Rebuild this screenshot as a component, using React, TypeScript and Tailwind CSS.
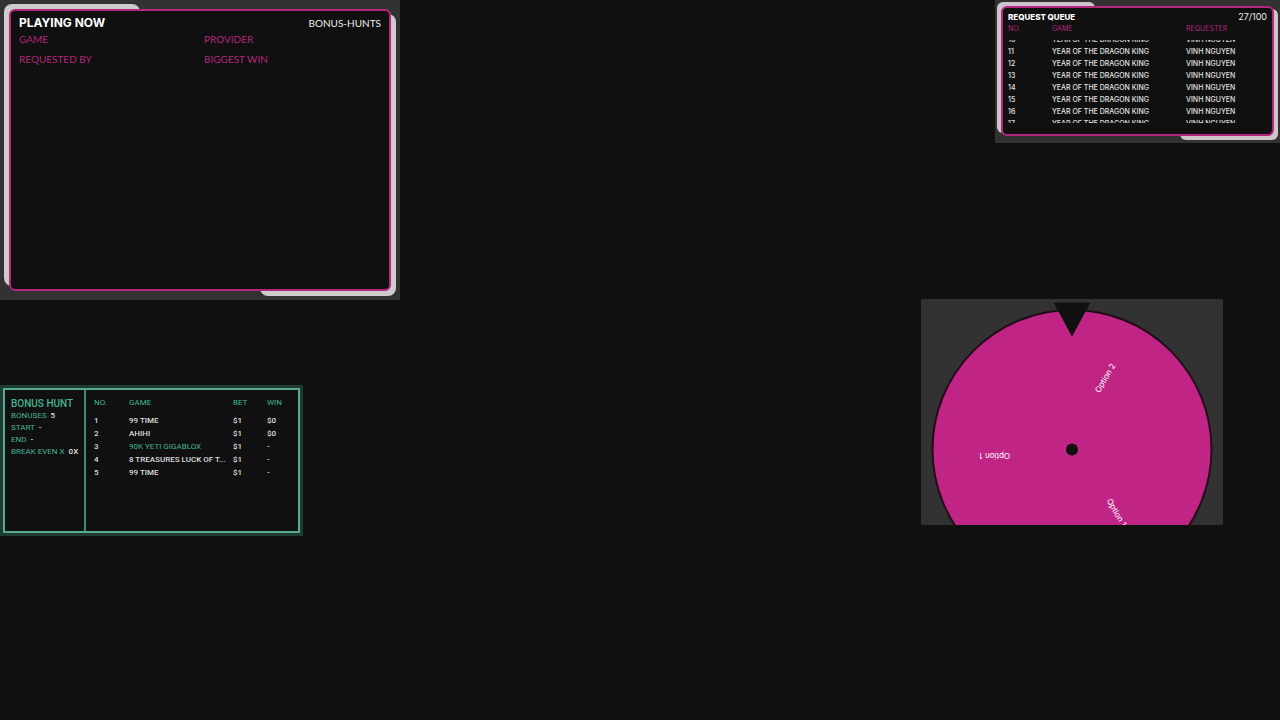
import type { ReactNode } from "react";

type HuntRow = { no: number; game: string; bet: string; win: string; active?: boolean };

const huntRows: HuntRow[] = [
  { no: 1, game: "99 TIME", bet: "$1", win: "$0" },
  { no: 2, game: "AHIHI", bet: "$1", win: "$0" },
  { no: 3, game: "90K YETI GIGABLOX", bet: "$1", win: "-", active: true },
  { no: 4, game: "8 TREASURES LUCK OF T...", bet: "$1", win: "-" },
  { no: 5, game: "99 TIME", bet: "$1", win: "-" },
];

const huntStats = [
  { label: "BONUSES", value: "5" },
  { label: "START", value: "-" },
  { label: "END", value: "-" },
  { label: "BREAK EVEN X", value: "0X" },
];

const queueNumbers = [10, 11, 12, 13, 14, 15, 16, 17];

const wheelOptions = [
  { label: "Option 2", angle: -60 },
  { label: "Option 1", angle: 60 },
  { label: "Option 1", angle: 180 },
];

function PlayingNow() {
  return (
    <section className="relative isolate h-[300px] w-[400px] bg-[#323232] p-[9px]">
      <div className="absolute top-1 left-1 -z-10 h-[282px] w-[136px] rounded-lg bg-[#cfcbcd]" />
      <div className="absolute right-1 bottom-1 -z-10 h-[282px] w-[136px] rounded-lg bg-[#cfcbcd]" />
      <div className="h-full rounded-md border-2 border-[#b3267c] bg-[#101010] px-2 py-1">
        <header className="flex items-center justify-between leading-4">
          <h2 className="text-[12px] font-bold text-white">PLAYING NOW</h2>
          <span className="font-['Lato',sans-serif] text-[10px] text-[#eeeeee]">BONUS-HUNTS</span>
        </header>
        <dl className="grid grid-cols-2 gap-x-2 font-['Lato',sans-serif] text-[10px] text-[#b3267c]">
          <dt className="leading-4">GAME</dt>
          <dt className="leading-4">PROVIDER</dt>
          <dt className="leading-6">REQUESTED BY</dt>
          <dt className="leading-6">BIGGEST WIN</dt>
        </dl>
      </div>
    </section>
  );
}

function QueueRow({ children }: { children: ReactNode }) {
  return <tr className="grid grid-cols-[44px_134px_1fr] text-left">{children}</tr>;
}

function RequestQueue() {
  return (
    <section className="relative isolate h-[143px] w-[285px] bg-[#323232] p-[6px]">
      <div className="absolute top-[2px] left-[2px] -z-10 h-[131px] w-[98px] rounded-md bg-[#cfc4cc]" />
      <div className="absolute right-[2px] bottom-[3px] -z-10 h-[131px] w-[98px] rounded-md bg-[#cfc4cc]" />
      <div className="h-[130px] rounded-md border-2 border-[#b3267c] bg-[#101010] px-[5px] pt-[3px]">
        <header className="flex items-center justify-between leading-3">
          <h2 className="text-[8px] font-extrabold text-white">REQUEST QUEUE</h2>
          <span className="text-[9px] text-[#eeeeee]">27/100</span>
        </header>
        <table className="block text-[7px] leading-3">
          <thead className="block h-[17px] text-[#b3267c]">
            <QueueRow>
              <th className="font-normal">NO.</th>
              <th className="font-normal">GAME</th>
              <th className="font-normal">REQUESTER</th>
            </QueueRow>
          </thead>
          <tbody className="flex h-[83px] flex-col justify-center overflow-hidden font-medium text-[#e2e2e2]">
            {queueNumbers.map((n) => (
              <QueueRow key={n}>
                <td>{n}</td>
                <td>YEAR OF THE DRAGON KING</td>
                <td>VINH NGUYEN</td>
              </QueueRow>
            ))}
          </tbody>
        </table>
      </div>
    </section>
  );
}

function BonusHunt() {
  return (
    <section className="h-[151px] w-[303px] bg-[#1d3a33] p-[3px] font-['Roboto',sans-serif]">
      <div className="flex h-full border-2 border-[#56a98f] bg-[#101010]">
        <div className="w-[81px] shrink-0 border-r-2 border-[#3d8a72] pt-2 pl-[6px] whitespace-nowrap">
          <h2 className="text-[10px] leading-3 font-medium text-[#45b492]">BONUS HUNT</h2>
          <dl className="text-[8px] leading-3">
            {huntStats.map((s) => (
              <div key={s.label} className="flex gap-1">
                <dt className="text-[#45b492]">{s.label}</dt>
                <dd className="font-medium text-[#dddddd]">{s.value}</dd>
              </div>
            ))}
          </dl>
        </div>
        <table className="mt-[6px] ml-2 block grow text-[8px] leading-[13px]">
          <thead className="block pb-[5px] text-[#45b492]">
            <tr className="grid grid-cols-[35px_104px_34px_1fr] text-left">
              <th className="font-normal">NO.</th>
              <th className="font-normal">GAME</th>
              <th className="font-normal">BET</th>
              <th className="font-normal">WIN</th>
            </tr>
          </thead>
          <tbody className="block font-medium whitespace-nowrap text-[#dddddd]">
            {huntRows.map((r) => (
              <tr key={r.no} className="grid grid-cols-[35px_104px_34px_1fr]">
                <td>{r.no}</td>
                <td className={r.active ? "font-normal text-[#45b492]" : undefined}>{r.game}</td>
                <td>{r.bet}</td>
                <td>{r.win}</td>
              </tr>
            ))}
          </tbody>
        </table>
      </div>
    </section>
  );
}

function Wheel() {
  return (
    <section className="h-[226px] w-[302px] overflow-hidden bg-[#323232]">
      <svg width="302" height="302" viewBox="0 0 302 302" role="img" aria-label="Prize wheel">
        <circle cx="151" cy="150.500" r="139.5" fill="#c02585" stroke="#240a1b" strokeWidth="2" />
        {wheelOptions.map((o) => (
          <text
            key={o.angle}
            x="62"
            y="-4"
            fontSize="8"
            fill="#ffffff"
            transform={`translate(151 150) rotate(${o.angle})`}
          >
            {o.label}
          </text>
        ))}
        <circle cx="151" cy="150.500" r="6" fill="#101010" />
        <path d="M132.500 3.500H169.500L151 37.500Z" fill="#101010" />
      </svg>
    </section>
  );
}

export default function App() {
  return (
    <main className="flex min-h-screen items-start justify-between bg-[#101010] font-['Inter',sans-serif]">
      <div className="flex flex-col gap-[85px]">
        <PlayingNow />
        <BonusHunt />
      </div>
      <div className="flex flex-col items-end gap-[156px]">
        <RequestQueue />
        <div className="mr-[57px]">
          <Wheel />
        </div>
      </div>
    </main>
  );
}
